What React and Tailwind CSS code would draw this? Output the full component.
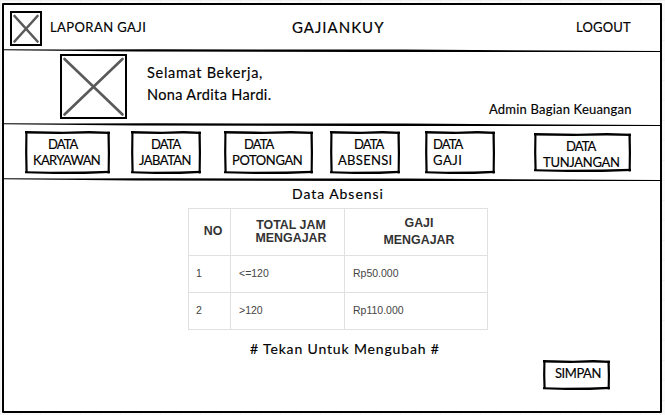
import React from "react";

const lato = "font-['Lato','Liberation_Sans',sans-serif]";

// Hand-drawn rectangle: every side is a stroke of uneven thickness.
function SketchFrame({ w, h }) {
  return (
    <svg className="pointer-events-none absolute inset-0" width={w} height={h} viewBox={`0 0 ${w} ${h}`} fill="#000">
      <polygon points={`0,0 ${w * 0.45},0.7 ${w * 0.75},0 ${w},0.7 ${w},3 ${w * 0.75},2.5 ${w * 0.4},3 0,2.5`} />
      <polygon points={`${w - 2.6},0.8 ${w - 0.3},0.8 ${w},${h * 0.5} ${w - 0.3},${h - 0.5} ${w - 2.4},${h - 0.5} ${w - 2.2},${h * 0.5}`} />
      <polygon points={`0,${h - 2.8} ${w * 0.3},${h - 2.2} ${w * 0.7},${h - 2.5} ${w},${h - 3.2} ${w},${h - 1} ${w * 0.7},${h - 0.1} ${w * 0.35},${h} 0,${h - 0.8}`} />
      <polygon points={`0.4,0 2.5,0 2.3,${h * 0.5} 2.7,${h - 1} 0.5,${h - 1} 0.1,${h * 0.5}`} />
    </svg>
  );
}

function Rule() {
  return (
    <svg className="pointer-events-none absolute bottom-[-1px] left-0" width="656" height="4" viewBox="0 0 656 4">
      <polygon points="-2,0.3 60,0.4 150,0.3 400,0.6 656,2 656,3 500,3.1 360,3 130,2.6 -2,1.3" fill="#000" />
    </svg>
  );
}

function ImageBox({ className, w, h }) {
  return (
    <div className={`relative shrink-0 ${className}`}>
      <svg className="block" width={w} height={h} viewBox={`0 0 ${w} ${h}`}>
        <path d={`M4.5 5 L${w - 4.5} ${h - 4.5} M${w - 4.5} 5 L4.5 ${h - 4.5}`} stroke="#5a5a5a" strokeWidth="2.6" strokeLinecap="round" />
        <rect x="1" y="1" width={w - 2} height={h - 2} fill="none" stroke="#000" strokeWidth="2" />
      </svg>
    </div>
  );
}

function MenuButton({ w, h, className, top, bottom, topClass, bottomClass }) {
  return (
    <button className={`relative flex shrink-0 flex-col items-start text-left text-[13px] leading-4 whitespace-nowrap ${className}`}>
      <SketchFrame w={w} h={h} />
      <span className={topClass}>{top}</span>
      {bottom && <span className={bottomClass}>{bottom}</span>}
    </button>
  );
}

export default function App() {
  return (
    <div className={`h-[415px] w-[665px] overflow-hidden bg-[#fafafa] bg-[linear-gradient(#f1f1f1_1px,transparent_1px),linear-gradient(90deg,#f1f1f1_1px,transparent_1px)] bg-[size:20px_20px] pt-[3px] pl-[2px] text-black [-webkit-text-stroke:0.15px_currentColor] ${lato}`}>
      <main className="flex h-[410px] w-[660px] flex-col rounded-[1px] border-2 border-black bg-white">
        <header className="relative flex h-[47px] shrink-0">
          <ImageBox className="mt-[6px] ml-[6px]" w={32} h={35} />
          <span className="mt-[13px] ml-[8px] w-[242px] text-[13px] leading-[18px] tracking-[0.42px] whitespace-nowrap">LAPORAN GAJI</span>
          <h1 className="mt-[13px] w-[284px] text-[15px] leading-[18px] tracking-[1px] whitespace-nowrap">GAJIANKUY</h1>
          <a className="mt-[13px] text-[13px] leading-[18px] tracking-[0.2px]">LOGOUT</a>
          <Rule />
        </header>

        <section className="relative flex h-[74px] shrink-0">
          <ImageBox className="mt-[2px] ml-[56px]" w={67} h={65} />
          <div className="mt-[10px] ml-[20px] w-[342px] text-[14.5px] leading-[22px] whitespace-nowrap">
            <p className="tracking-[0.7px]">Selamat Bekerja,</p>
            <p className="tracking-[0.35px]">Nona Ardita Hardi.</p>
          </div>
          <p className="mt-[48px] text-[13px] leading-[18px] tracking-[0.2px] whitespace-nowrap">Admin Bagian Keuangan</p>
          <Rule />
        </section>

        <nav className="relative flex h-[55px] shrink-0 pt-[5px] pl-[21px]">
          <MenuButton w={85} h={43} className="h-[43px] w-[85px] pt-[5px]" top="DATA" topClass="ml-[23px] tracking-[-0.9px]" bottom="KARYAWAN" bottomClass="ml-[8px] tracking-[-0.65px]" />
          <MenuButton w={70} h={43} className="ml-[21px] h-[43px] w-[70px] pt-[5px]" top="DATA" topClass="ml-[20px] tracking-[-0.9px]" bottom="JABATAN" bottomClass="ml-[8px] tracking-[-0.55px]" />
          <MenuButton w={89} h={43} className="ml-[23px] h-[43px] w-[89px] pt-[5px]" top="DATA" topClass="ml-[20px] tracking-[-0.9px]" bottom="POTONGAN" bottomClass="ml-[8px] tracking-[-0.4px]" />
          <MenuButton w={70} h={43} className="ml-[17px] h-[43px] w-[70px] pt-[5px]" top="DATA" topClass="ml-[24px] tracking-[-0.9px]" bottom="ABSENSI" bottomClass="ml-[8px] tracking-[0.3px]" />
          <MenuButton w={70} h={43} className="ml-[25px] h-[43px] w-[70px] pt-[5px]" top="DATA" topClass="ml-[8px] tracking-[-0.9px]" bottom="GAJI" bottomClass="ml-[8px] tracking-[0.5px]" />
          <MenuButton w={97} h={39} className="mt-[2px] ml-[39px] h-[39px] w-[97px] pt-[5px]" top="DATA" topClass="ml-[32px] tracking-[-0.9px]" bottom="TUNJANGAN" bottomClass="ml-[9px] tracking-[-0.3px]" />
          <Rule />
        </nav>

        <section className="flex flex-col">
          <h2 className="mt-[4px] ml-[288px] text-[14px] leading-[18px] tracking-[0.95px]">Data Absensi</h2>
          <table className="mt-[5px] ml-[184px] w-[300px] table-fixed border-collapse font-['Liberation_Sans',Arial,sans-serif] text-[10.5px] text-[#444] [-webkit-text-stroke:0]">
            <colgroup>
              <col className="w-[42px]" />
              <col className="w-[114px]" />
              <col className="w-[143px]" />
            </colgroup>
            <thead className="text-[12.4px] leading-[13px] text-[#333]">
              <tr className="h-[47px]">
                <th className="border border-[#e0e0e0] p-0 pb-[2px] pl-[7px]">NO</th>
                <th className="border border-[#e0e0e0] p-0 pl-[7px]">TOTAL JAM<br />MENGAJAR</th>
                <th className="border border-[#e0e0e0] p-0 pl-[6px] leading-[17px]">GAJI<br />MENGAJAR</th>
              </tr>
            </thead>
            <tbody>
              {[["1", "<=120", "Rp50.000"], ["2", ">120", "Rp110.000"]].map((r) => (
                <tr key={r[0]} className="h-[37px]">
                  {r.map((c) => (
                    <td key={c} className="border border-[#e0e0e0] p-0 pl-[8px] first:pl-[7px]">{c}</td>
                  ))}
                </tr>
              ))}
            </tbody>
          </table>
          <p className="mt-[10px] ml-[246px] text-[14px] leading-[18px] tracking-[0.85px]"># Tekan Untuk Mengubah #</p>
          <MenuButton w={67} h={30} className="mt-[2px] ml-[539px] h-[30px] w-[67px] pt-[5px]" top="SIMPAN" topClass="ml-[12px] tracking-[-0.45px]" />
        </section>
      </main>
    </div>
  );
}
